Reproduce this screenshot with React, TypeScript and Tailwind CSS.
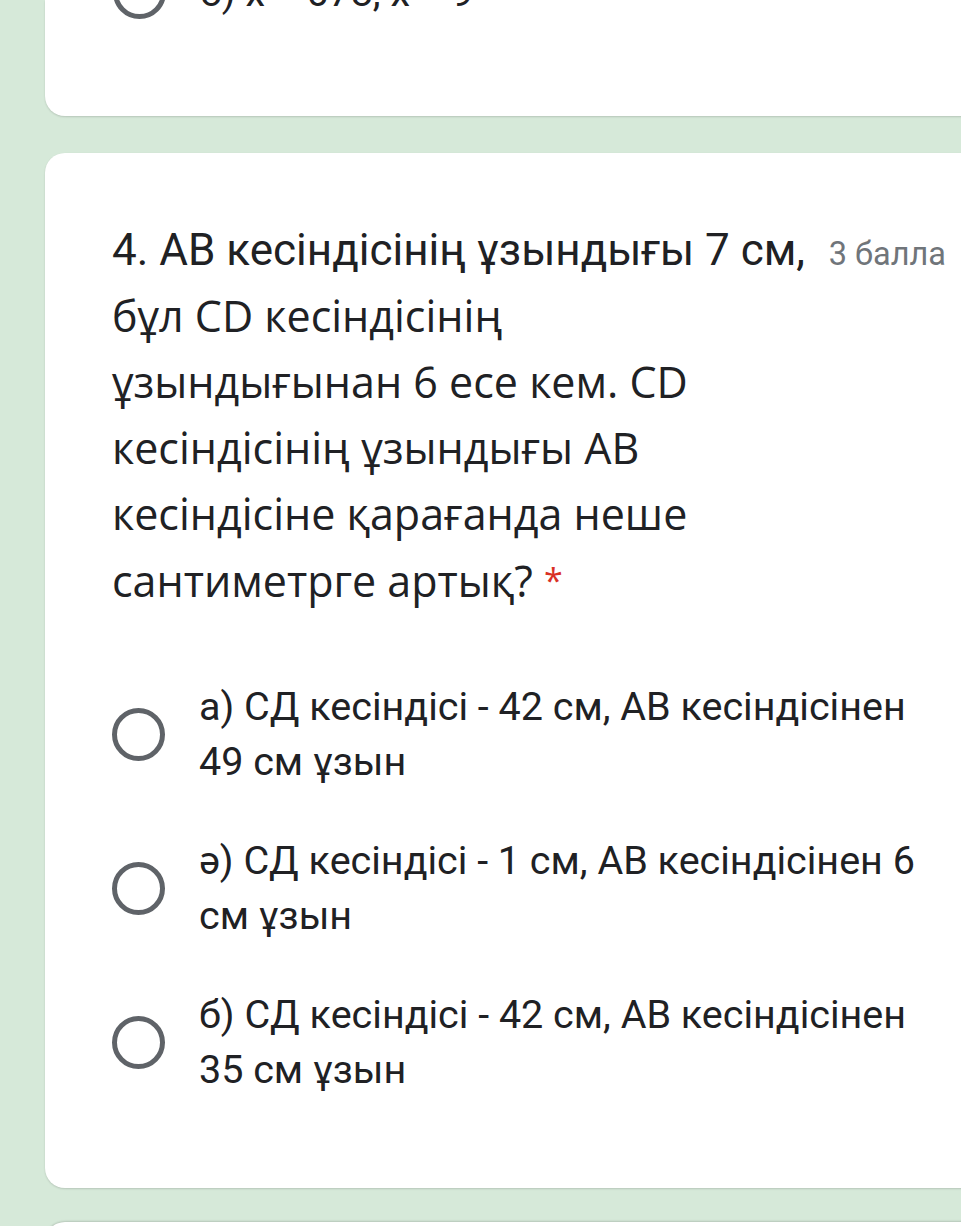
import React from "react";

const titleLines = [
  "бұл CD кесіндісінің",
  "ұзындығынан 6 есе кем. CD",
  "кесіндісінің ұзындығы AB",
  "кесіндісіне қарағанда неше",
];

const options = [
  ["а) СД кесіндісі - 42 см, АВ кесіндісінен", "49 см ұзын"],
  ["ә) СД кесіндісі - 1 см, АВ кесіндісінен 6", "см ұзын"],
  ["б) СД кесіндісі - 42 см, АВ кесіндісінен", "35 см ұзын"],
];

const Radio = () => (
  <div className="w-[53px] h-[53px] shrink-0 rounded-full border-[5px] border-[#5f6368]" />
);

const Option = ({ lines }: { lines: string[] }) => (
  <div className="flex items-center gap-[34px]">
    <Radio />
    <div className="text-[39.5px] leading-[55px] text-[#202124] font-['Roboto',sans-serif]">
      {lines.map((l, i) => (
        <div key={i} className="whitespace-nowrap">
          {l}
        </div>
      ))}
    </div>
  </div>
);

export default function App() {
  return (
    <div className="w-[961px] h-[1226px] overflow-hidden bg-[#d6e9d9] flex flex-col">
      {/* previous question, cut off at the top */}
      <div className="ml-[45px] w-[940px] h-[116px] shrink-0 bg-white rounded-b-[20px] overflow-hidden shadow-[0_1px_2px_rgba(0,0,0,0.15)] pl-[68px]">
        <div className="-mt-[35px]">
          <Option lines={["б) x = 678, x = 9"]} />
        </div>
      </div>

      {/* question 4 */}
      <div className="ml-[45px] mt-[37px] w-[940px] shrink-0 bg-white rounded-[20px] shadow-[0_1px_2px_rgba(0,0,0,0.15)] pl-[67px] pr-[39px] pt-[64px] pb-[91px]">
        <div className="flex items-baseline justify-between">
          <div className="text-[#202124] text-[43px] leading-[66px]">
            <div className="whitespace-nowrap font-['Roboto',sans-serif] text-[44px]">
              4. AB кесіндісінің ұзындығы 7 см,
            </div>
            {titleLines.map((l, i) => (
              <div key={i} className="whitespace-nowrap font-['Open_Sans',sans-serif]">
                {l}
              </div>
            ))}
            <div className="whitespace-nowrap font-['Open_Sans',sans-serif]">
              сантиметрге артық?{" "}
              <span className="text-[#d93025] text-[34px] align-[4px]">*</span>
            </div>
          </div>
          <div className="text-[32.5px] text-[#70757a] font-['Roboto',sans-serif] whitespace-nowrap">
            3 балла
          </div>
        </div>

        <div className="mt-[65px] flex flex-col gap-[44px]">
          {options.map((o, i) => (
            <Option key={i} lines={o} />
          ))}
        </div>
      </div>

      {/* next question */}
      <div className="ml-[45px] mt-[34px] w-[940px] h-[60px] shrink-0 bg-white rounded-t-[20px] shadow-[0_-1px_2px_rgba(0,0,0,0.15)]" />
    </div>
  );
}
